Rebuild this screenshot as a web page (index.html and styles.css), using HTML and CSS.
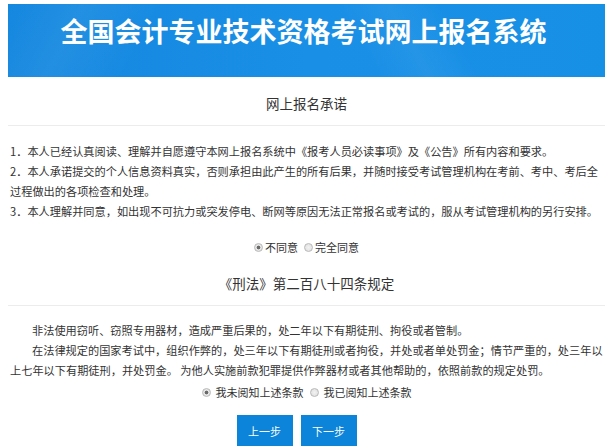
FILE: index.html
```html
<!DOCTYPE html>
<html lang="zh-CN">
<head>
<meta charset="utf-8">
<title>全国会计专业技术资格考试网上报名系统</title>
<link rel="stylesheet" href="styles.css">
</head>
<body>
<header class="banner">
  <h1 class="banner-title">全国会计专业技术资格考试网上报名系统</h1>
</header>

<section class="block">
  <h2 class="block-title">网上报名承诺</h2>
  <div class="terms">
    <p>1．本人已经认真阅读、理解并自愿遵守本网上报名系统中《报考人员必读事项》及《公告》所有内容和要求。</p>
    <p>2．本人承诺提交的个人信息资料真实，否则承担由此产生的所有后果，并随时接受考试管理机构在考前、考中、考后全过程做出的各项检查和处理。</p>
    <p>3．本人理解并同意，如出现不可抗力或突发停电、断网等原因无法正常报名或考试的，服从考试管理机构的另行安排。</p>
  </div>
  <div class="choice choice-first">
    <label class="opt"><input type="radio" name="agree" checked disabled><span>不同意</span></label>
    <label class="opt"><input type="radio" name="agree" disabled><span>完全同意</span></label>
  </div>
</section>

<section class="block">
  <h2 class="block-title">《刑法》第二百八十四条规定</h2>
  <div class="law">
    <p>非法使用窃听、窃照专用器材，造成严重后果的，处二年以下有期徒刑、拘役或者管制。</p>
    <p>在法律规定的国家考试中，组织作弊的，处三年以下有期徒刑或者拘役，并处或者单处罚金；情节严重的，处三年以上七年以下有期徒刑，并处罚金。 为他人实施前款犯罪提供作弊器材或者其他帮助的，依照前款的规定处罚。</p>
  </div>
  <div class="choice choice-second">
    <label class="opt"><input type="radio" name="know" checked disabled><span>我未阅知上述条款</span></label>
    <label class="opt"><input type="radio" name="know" disabled><span>我已阅知上述条款</span></label>
  </div>
  <div class="actions">
    <button class="btn" type="button">上一步</button>
    <button class="btn" type="button">下一步</button>
  </div>
</section>
</body>
</html>
```
FILE: styles.css
```css
html, body {
  background: #ffffff;
}
body {
  margin: 4px 8px 0;
  font-family: "Noto Sans CJK SC", "Noto Sans", sans-serif;
  color: #333333;
  font-size: 11px;
}
.banner {
  height: 73px;
  box-sizing: border-box;
  padding-top: 11px;
  background:
    linear-gradient(118deg, rgba(255,255,255,0) 0%, rgba(255,255,255,0.06) 12%, rgba(255,255,255,0) 24%),
    linear-gradient(60deg, rgba(255,255,255,0) 58%, rgba(255,255,255,0.05) 66%, rgba(255,255,255,0) 74%),
    linear-gradient(90deg, #1487df 0%, #1a8fe6 50%, #1690e5 100%);
}
.banner-title {
  margin: 0;
  text-align: center;
  color: #ffffff;
  font-size: 27px;
  line-height: 32px;
  font-weight: bold;
  letter-spacing: 0;
  padding-right: 6px;
}
.block-title {
  margin: 16px 0 0;
  padding-bottom: 12px;
  border-bottom: 1px solid #ececec;
  text-align: center;
  font-size: 13.5px;
  line-height: 20px;
  font-weight: normal;
  color: #333333;
}
.terms {
  margin-top: 15px;
  padding: 0 2px;
}
.terms p, .law p {
  margin: 0;
  line-height: 20px;
  font-size: 11.2px;
}
.law {
  margin-top: 14px;
  padding: 0 2px;
}
.law p {
  text-indent: 22px;
}
.choice {
  display: flex;
  justify-content: center;
  line-height: 20px;
}
.choice-first {
  margin-top: 16px;
  gap: 6px;
}
.choice-second {
  margin-top: 2px;
  gap: 6px;
}
.opt {
  display: flex;
  align-items: center;
}
.opt input {
  -webkit-appearance: none;
  appearance: none;
  width: 9px;
  height: 9px;
  margin: 0;
  border: 1px solid #b9b9b9;
  border-radius: 50%;
  background: radial-gradient(circle, #f2f2f2 0%, #dcdcdc 100%);
  box-sizing: border-box;
}
.opt input:checked {
  background: radial-gradient(circle, #6a6a6a 0, #6a6a6a 1.6px, #e8e8e8 2.2px, #dcdcdc 100%);
}
.choice-first .opt span {
  margin-left: 2px;
}
.choice-second .opt span {
  margin-left: 5px;
}
.actions {
  display: flex;
  justify-content: center;
  gap: 8px;
  margin-top: 13px;
  padding-right: 20px;
}
.btn {
  width: 56px;
  height: 31px;
  border: none;
  background: #0b84d9;
  color: #ffffff;
  font-family: inherit;
  font-size: 11px;
  padding: 0;
  cursor: pointer;
}
```
